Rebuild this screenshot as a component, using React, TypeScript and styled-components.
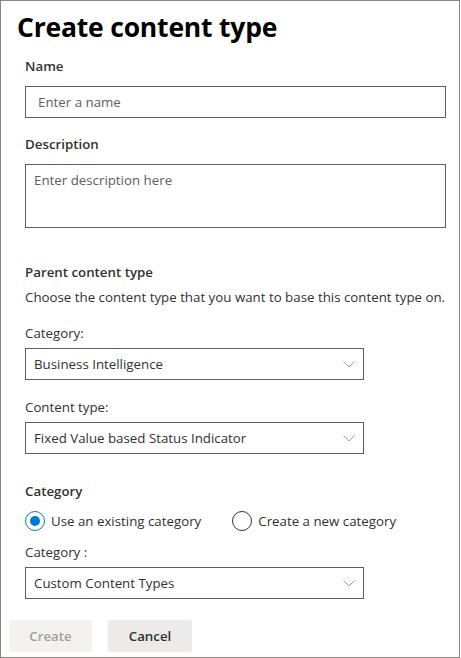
import React from "react";
import styled, { createGlobalStyle } from "styled-components";

const GlobalStyle = createGlobalStyle`
  html, body { margin: 0; padding: 0; background: #ffffff; }
  body { font-family: "Open Sans", "Noto Sans", Arial, sans-serif; color: #323130; }
  * { box-sizing: border-box; }
`;

const Panel = styled.div`
  width: 460px;
  height: 658px;
  border: 1px solid #8a8886;
  background: #fff;
  display: flex;
  flex-direction: column;
`;

const Title = styled.h1`
  margin: 8px 0 0 16px;
  font-size: 26.5px;
  line-height: 36px;
  font-weight: 700;
  color: #000;
  letter-spacing: -0.2px;
`;

const Form = styled.div`
  display: flex;
  flex-direction: column;
  padding: 0 13px 0 24px;
`;

const Label = styled.div<{ $mt: number; $strong?: boolean }>`
  margin-top: ${(p) => p.$mt}px;
  font-size: 13.3px;
  line-height: 20px;
  font-weight: ${(p) => (p.$strong ? 600 : 400)};
  color: #323130;
`;

const TextInput = styled.div<{ $mt: number }>`
  margin-top: ${(p) => p.$mt}px;
  height: 32px;
  border: 1px solid #605e5c;
  padding: 0 12px;
  display: flex;
  align-items: center;
  font-size: 13.3px;
  color: #605e5c;
`;

const TextArea = styled.div<{ $mt: number }>`
  margin-top: ${(p) => p.$mt}px;
  height: 64px;
  border: 1px solid #605e5c;
  padding: 5px 8px;
  font-size: 13.3px;
  line-height: 20px;
  color: #605e5c;
`;

const Select = styled.div<{ $mt: number }>`
  margin-top: ${(p) => p.$mt}px;
  width: 339px;
  height: 32px;
  border: 1px solid #605e5c;
  padding: 0 8px;
  display: flex;
  align-items: center;
  justify-content: space-between;
  font-size: 13.3px;
  color: #323130;
`;

const RadioRow = styled.div<{ $mt: number }>`
  margin-top: ${(p) => p.$mt}px;
  height: 20px;
  display: flex;
  align-items: center;
  gap: 31px;
`;

const RadioOption = styled.label`
  display: flex;
  align-items: center;
  gap: 6px;
  font-size: 13.3px;
  line-height: 20px;
  color: #323130;
`;

const RadioCircle = styled.span<{ $checked?: boolean }>`
  width: 20px;
  height: 20px;
  border-radius: 50%;
  border: 1px solid ${(p) => (p.$checked ? "#0078d4" : "#323130")};
  display: flex;
  align-items: center;
  justify-content: center;
  &::after {
    content: "";
    width: 10px;
    height: 10px;
    border-radius: 50%;
    background: ${(p) => (p.$checked ? "#0078d4" : "transparent")};
  }
`;

const Footer = styled.div`
  margin-top: 21px;
  padding-left: 8px;
  display: flex;
  gap: 16px;
`;

const Button = styled.button<{ $disabled?: boolean }>`
  height: 32px;
  width: ${(p) => (p.$disabled ? 83 : 84)}px;
  border: none;
  border-radius: 2px;
  background: ${(p) => (p.$disabled ? "#f3f2f1" : "#edebe9")};
  color: ${(p) => (p.$disabled ? "#a19f9d" : "#323130")};
  font-family: inherit;
  font-size: 13.3px;
  font-weight: 600;
  padding: 0;
`;

const Chevron = () => (
  <svg width="12" height="7" viewBox="0 0 12 7" fill="none">
    <path d="M0.5 0.5 L6 6 L11.5 0.5" stroke="#a19f9d" strokeWidth="1" />
  </svg>
);

const Dropdown: React.FC<{ value: string; mt: number }> = ({ value, mt }) => (
  <Select $mt={mt}>
    <span>{value}</span>
    <Chevron />
  </Select>
);

export default function App() {
  return (
    <>
      <GlobalStyle />
      <Panel>
        <Title>Create content type</Title>
        <Form>
          <Label $mt={11} $strong>Name</Label>
          <TextInput $mt={10}>Enter a name</TextInput>
          <Label $mt={16} $strong>Description</Label>
          <TextArea $mt={10}>Enter description here</TextArea>
          <Label $mt={34} $strong>Parent content type</Label>
          <Label $mt={5}>Choose the content type that you want to base this content type on.</Label>
          <Label $mt={16}>Category:</Label>
          <Dropdown mt={5} value="Business Intelligence" />
          <Label $mt={17}>Content type:</Label>
          <Dropdown mt={5} value="Fixed Value based Status Indicator" />
          <Label $mt={27} $strong>Category</Label>
          <RadioRow $mt={10}>
            <RadioOption>
              <RadioCircle $checked />
              Use an existing category
            </RadioOption>
            <RadioOption>
              <RadioCircle />
              Create a new category
            </RadioOption>
          </RadioRow>
          <Label $mt={11}>Category :</Label>
          <Dropdown mt={5} value="Custom Content Types" />
        </Form>
        <Footer>
          <Button $disabled>Create</Button>
          <Button>Cancel</Button>
        </Footer>
      </Panel>
    </>
  );
}
